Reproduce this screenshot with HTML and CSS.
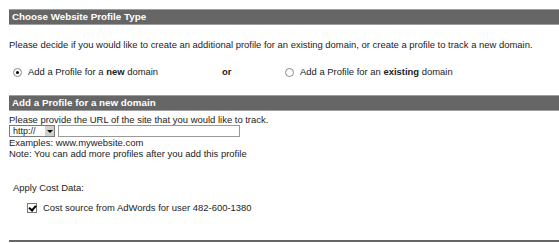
FILE: index.html
```html
<!DOCTYPE html>
<html lang="en">
<head>
    <meta charset="UTF-8">
    <title>Choose Website Profile Type</title>
    <link rel="stylesheet" href="styles.css">
</head>
<body>
    <div class="section-header">Choose Website Profile Type</div>
    <p class="intro">Please decide if you would like to create an additional profile for an existing domain, or create a profile to track a new domain.</p>
    <div class="choice-row">
        <label class="choice choice-new"><input type="radio" name="profileType" checked><span>Add a Profile for a <b>new</b> domain</span></label>
        <span class="or">or</span>
        <label class="choice"><input type="radio" name="profileType"><span>Add a Profile for an <b>existing</b> domain</span></label>
    </div>
    <div class="section-header">Add a Profile for a new domain</div>
    <div class="url-block">
        <div>Please provide the URL of the site that you would like to track.</div>
        <div class="url-row">
            <div class="protocol">
                <span class="protocol-value">http://</span>
                <span class="protocol-arrow"></span>
            </div>
            <input type="text" class="url-input">
        </div>
        <div>Examples: www.mywebsite.com</div>
        <div>Note: You can add more profiles after you add this profile</div>
    </div>
    <div class="cost-block">
        <div>Apply Cost Data:</div>
        <label class="cost-check"><input type="checkbox" checked><span>Cost source from AdWords for user 482-600-1380</span></label>
    </div>
    <div class="bottom-rule"></div>
</body>
</html>
```

FILE: styles.css
```css
body {
    font-family: "Liberation Sans", Arial, sans-serif;
    font-size: 9.45px;
    color: #222;
    margin: 9px 0 0 9px;
    background-color: #fff;
    overflow: hidden;
}
.section-header {
    background-color: #666;
    color: #fff;
    font-weight: bold;
    font-size: 9.8px;
    height: 14px;
    line-height: 14px;
    padding: 0 3px;
    border-top: 1px solid #a0a0a0;
    border-bottom: 1px solid #a0a0a0;
}
.intro {
    margin: 14px 0 0 0;
    line-height: 12px;
}
.choice-row {
    display: flex;
    align-items: center;
    margin: 15px 0 17px 0;
    height: 12px;
    line-height: 12px;
}
.choice {
    display: flex;
    align-items: center;
    gap: 6px;
}
.choice input {
    appearance: none;
    margin: 0;
    width: 9px;
    height: 9px;
    border: 1px solid #888;
    border-radius: 50%;
    background-color: #fff;
    box-sizing: border-box;
    position: relative;
}
.choice input:checked::after {
    content: "";
    position: absolute;
    left: 2px;
    top: 2px;
    width: 3px;
    height: 3px;
    border-radius: 50%;
    background-color: #000;
}
.choice-new {
    width: 209px;
    padding-left: 4px;
}
.or {
    font-weight: bold;
    width: 63px;
}
.url-block {
    margin-top: 3px;
    line-height: 11px;
}
.url-row {
    display: flex;
    gap: 3px;
    height: 12px;
    margin: 0;
}
.protocol {
    display: flex;
    justify-content: space-between;
    align-items: center;
    width: 46px;
    height: 12px;
    box-sizing: border-box;
    border: 1px solid #7a7a7a;
    background-color: #fff;
    padding-left: 3px;
}
.protocol-value {
    font-size: 9px;
    line-height: 10px;
}
.protocol-arrow {
    width: 9px;
    height: 10px;
    background-color: #d4d0c8;
    border-left: 1px solid #fff;
    position: relative;
}
.protocol-arrow::after {
    content: "";
    position: absolute;
    left: 2px;
    top: 4px;
    border-left: 3px solid transparent;
    border-right: 3px solid transparent;
    border-top: 3px solid #000;
}
.url-input {
    width: 182px;
    height: 12px;
    box-sizing: border-box;
    padding: 0;
    border: 1px solid #999;
}
.cost-block {
    margin: 23px 0 0 4px;
    line-height: 12px;
}
.cost-check {
    display: flex;
    align-items: center;
    gap: 6px;
    margin: 8px 0 0 14px;
}
.cost-check input {
    appearance: none;
    margin: 0;
    width: 10px;
    height: 10px;
    box-sizing: border-box;
    border: 1px solid #777;
    background-color: #fff;
    position: relative;
}
.cost-check input:checked::after {
    content: "";
    position: absolute;
    left: 2px;
    top: 0;
    width: 3px;
    height: 5px;
    border-right: 2px solid #000;
    border-bottom: 2px solid #000;
    transform: rotate(40deg);
}
.bottom-rule {
    margin-top: 26px;
    border-top: 2px solid #666;
}
```
